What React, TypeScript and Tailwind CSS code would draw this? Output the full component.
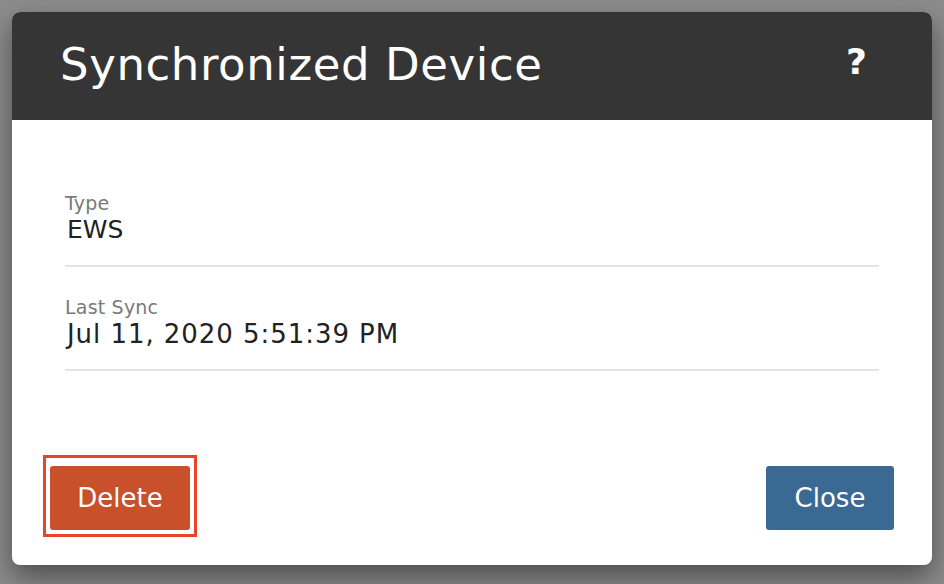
import React from 'react';

const font = { fontFamily: '"DejaVu Sans", "Liberation Sans", sans-serif' };

function Field({ label, value, valueClass }: { label: string; value: string; valueClass: string }) {
  return (
    <div className="border-b-2 border-[#e2e2e2] pt-[29px] pb-[19px]">
      <div className="text-[19px] leading-[22px] text-[#7a7a7a] tracking-[0.2px]">{label}</div>
      <div className={`leading-[32px] text-[#222] pl-[2px] ${valueClass}`}>{value}</div>
    </div>
  );
}

export default function App() {
  return (
    <div className="w-[944px] h-[584px] bg-[#8c8c8c] pt-[12px] pl-[12px]" style={font}>
      <div className="w-[920px] h-[553px] rounded-[8px] bg-white overflow-hidden flex flex-col shadow-[0_12px_28px_rgba(0,0,0,0.45)]">
        <div className="h-[108px] bg-[#353535] flex items-center justify-between pl-[48px] pr-[65px] shrink-0">
          <h1 className="text-[45px] text-white tracking-[0.6px] pb-[2px]">Synchronized Device</h1>
          <span className="text-[36px] font-bold text-white pb-[8px]">?</span>
        </div>
        <div className="px-[53px] pt-[43px] flex flex-col">
          <Field label="Type" value="EWS" valueClass="text-[25px]" />
          <Field label="Last Sync" value="Jul 11, 2020 5:51:39 PM" valueClass="text-[26px] tracking-[0.95px]" />
        </div>
        <div className="flex-1 flex items-end justify-between pl-[31px] pr-[38px] pb-[35px]">
          <div className="border-[3px] border-[#e8462a] pt-[8px] pb-[4px] px-[4px] -mb-[7px]">
            <button className="w-[140px] h-[64px] rounded-[3px] bg-[#c8502a] text-white text-[26px] block">Delete</button>
          </div>
          <button className="w-[128px] h-[64px] rounded-[3px] bg-[#3a6a94] text-white text-[26px]">Close</button>
        </div>
      </div>
    </div>
  );
}
